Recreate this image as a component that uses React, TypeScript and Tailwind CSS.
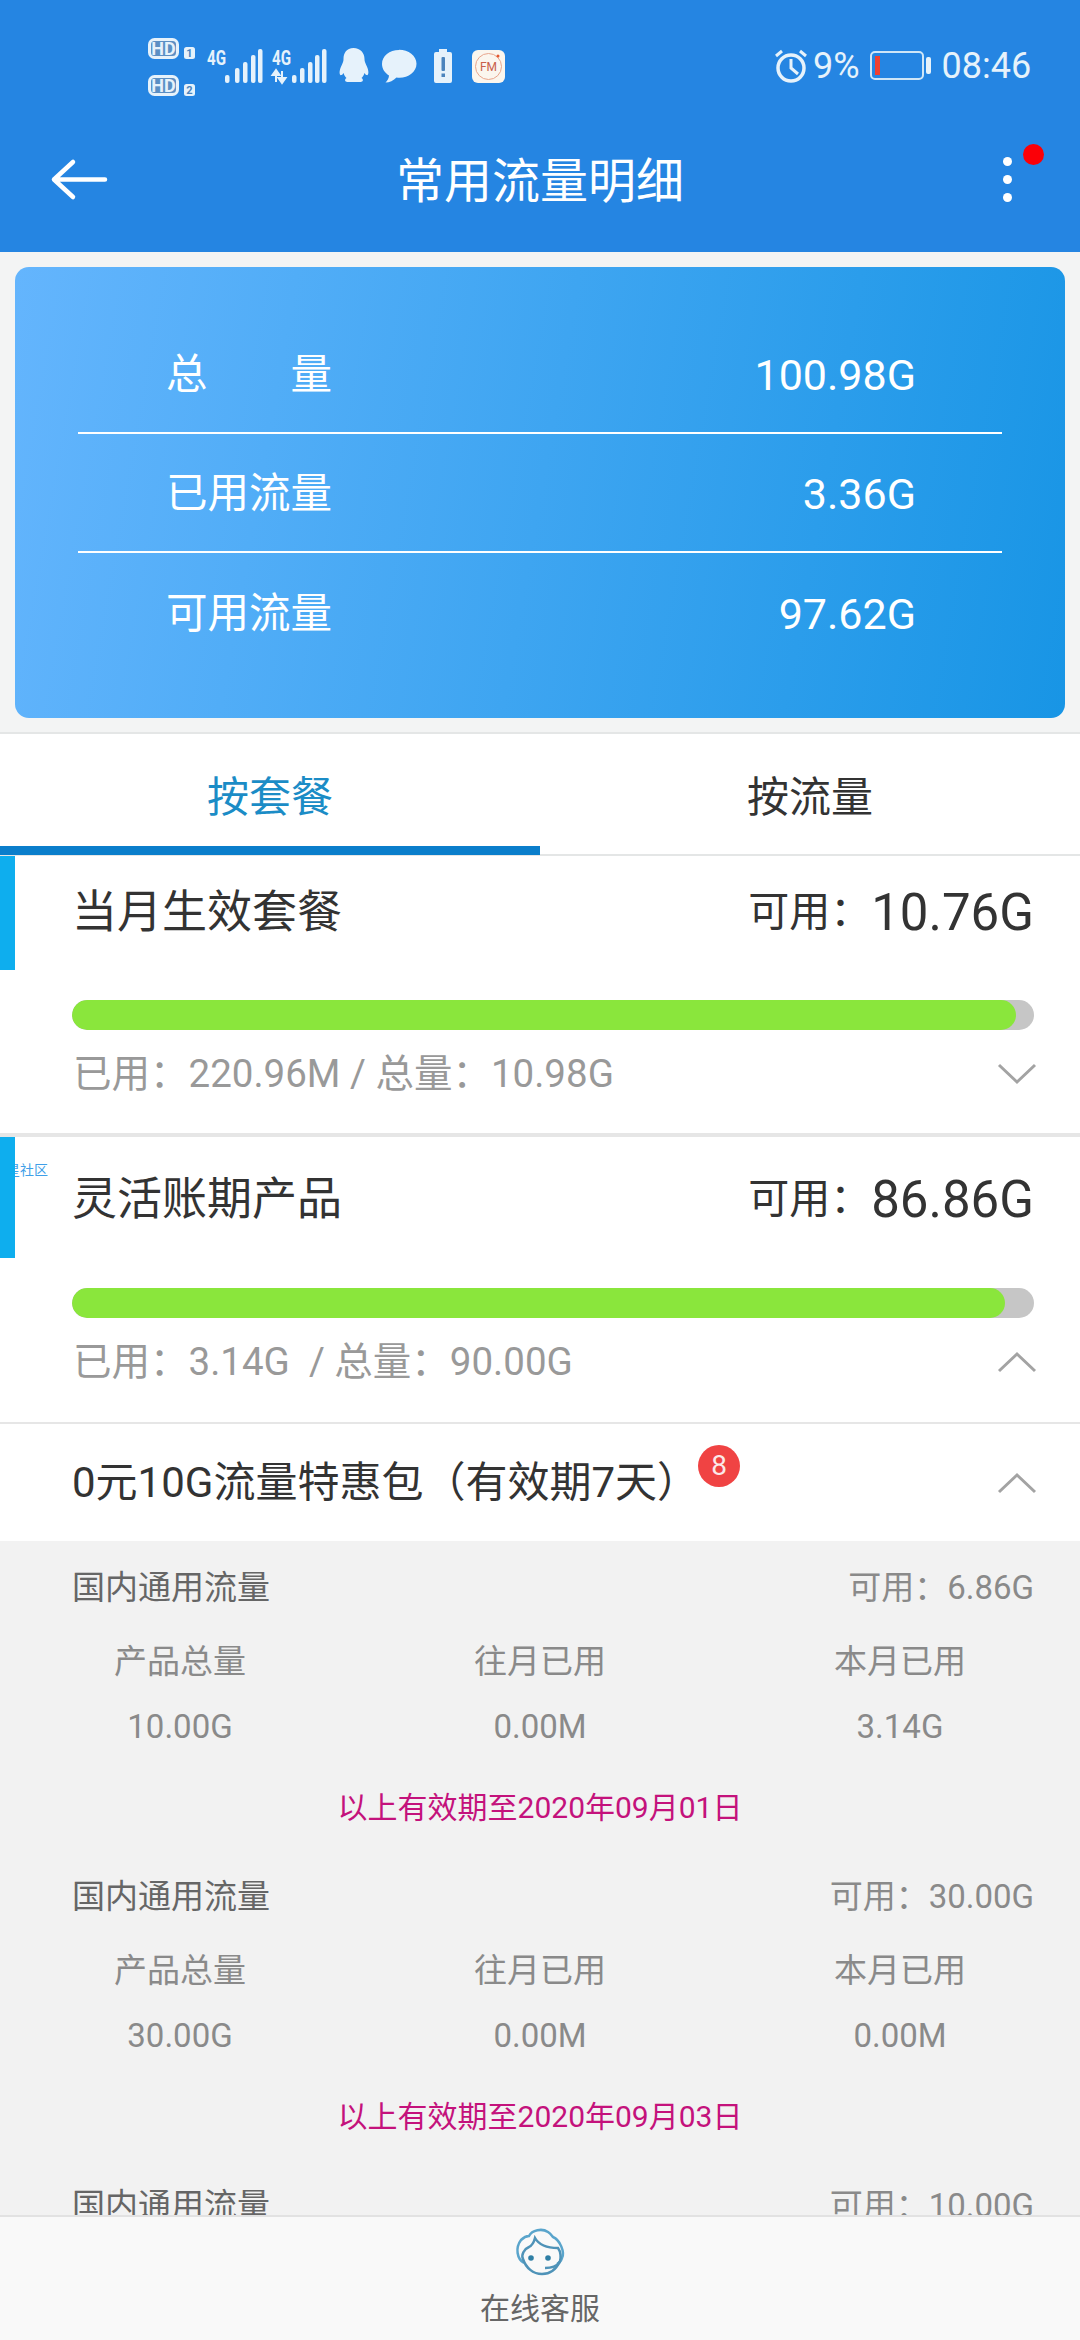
const cjk = "font-['Roboto','Noto_Sans_CJK_SC',sans-serif]";

function HD({ y, n }: { y: number; n: string }) {
  const c = "#e6f2fb";
  return (
    <>
      <rect x="149.500" y={y + 1.5} width="28" height="18" rx="5" fill="#5b8fc4" stroke={c} strokeWidth="3" />
      <text x="163.500" y={y + 16.5} textAnchor="middle" fontFamily="Roboto" fontWeight="700" fontSize="18" fill={c}>HD</text>
      <rect x="184" y={y + 9} width="11" height="12" rx="2.500" fill={c} />
      <text x="189.500" y={y + 19} textAnchor="middle" fontFamily="Roboto" fontWeight="700" fontSize="11" fill="#4b84bd">{n}</text>
    </>
  );
}

function StatusLeft() {
  const bars1 = [[225, 75], [235, 68], [243, 62], [251, 55], [258, 49]];
  const bars2 = [[292, 75], [300, 68], [308, 62], [315, 55], [322, 49]];
  const c = "#e6f2fb";
  return (
    <svg className="absolute left-[140px] top-[30px]" width="380" height="70" viewBox="140 30 380 70">
      <HD y={38} n="1" />
      <HD y={75} n="2" />
      <text x="207" y="65" fontFamily="Roboto" fontWeight="700" fontSize="20" fill={c} textLength="19" lengthAdjust="spacingAndGlyphs">4G</text>
      <text x="272" y="65" fontFamily="Roboto" fontWeight="700" fontSize="20" fill={c} textLength="19" lengthAdjust="spacingAndGlyphs">4G</text>
      {[...bars1, ...bars2].map(([x, y]) => (
        <rect key={x} x={x} y={y} width="4.500" height={83 - y} rx="2" fill={c} />
      ))}
      <path d="M276 74v8M276 70l-3.500 5h7zM282 71v8M282 83l-3.500-5h7z" stroke={c} strokeWidth="2" fill={c} />
      <path d="M353.500 48c-7 0-10 5-10 11 0 3-1 4-3 9-1.500 4-1 8 1 7 1 0 1-1 2-2 1 3 2 4 3 5-2 1-2 4 1 4h13c3 0 3-3 1-4 1-1 2-2 3-5 1 1 1 2 2 2 2 1 2.500-3 1-7-2-5-3-6-3-9 0-6-4-11-11-11z" fill={c} />
      <path d="M399 50c-9.500 0-17 6-17 14 0 5 3 9 7 11.500 0 2.500-1.500 5-3.500 7 4 0 8-2 11-5 1 .2 2 .3 3 .3 9 0 17-6 17-14s-8-14-17.500-14z" fill={c} />
      <path d="M439 52v-3h8v3h3a2 2 0 0 1 2 2v27a2 2 0 0 1-2 2h-14a2 2 0 0 1-2-2V54a2 2 0 0 1 2-2z" fill={c} />
      <rect x="441.500" y="57" width="3.500" height="14" rx="1" fill="#4b84bd" />
      <rect x="441.500" y="73.500" width="3.500" height="3.500" fill="#4b84bd" />
      <rect x="472" y="50" width="33" height="33" rx="6" fill="#fbf6ee" />
      <circle cx="488.500" cy="66.500" r="13" fill="none" stroke="#e8a58c" strokeWidth="1" />
      <circle cx="498" cy="56" r="1.500" fill="#e4572e" />
      <text x="488.500" y="71" textAnchor="middle" fontFamily="Roboto" fontSize="12" fill="#c8604a">FM</text>
    </svg>
  );
}

function StatusRight() {
  const c = "#e6f2fb";
  return (
    <div className="absolute left-[775px] top-[48px] flex h-[35px] items-center text-[#e6f2fb]">
      <svg width="32" height="35" viewBox="0 0 32 35" className="shrink-0">
        <circle cx="16" cy="20" r="13" fill="none" stroke={c} strokeWidth="3.500" />
        <path d="M16 11v9l7 6" fill="none" stroke={c} strokeWidth="3" />
        <path d="M1 8l6-5M31 8l-6-5" fill="none" stroke={c} strokeWidth="3" />
      </svg>
      <span className="ml-[6px] text-[36px] leading-none font-['Roboto',sans-serif]">9%</span>
      <div className="relative ml-[10px] h-[29px] w-[54px] rounded-[5px] border-2 border-[#cfe6f7]">
        <div className="absolute left-[3px] top-[3px] h-[19px] w-[5px] bg-[#f04030]" />
      </div>
      <div className="ml-[2px] h-[17px] w-[5px] rounded-[2px] bg-[#e6f2fb]" />
      <span className="ml-[11px] text-[36px] leading-none font-['Roboto',sans-serif]">08:46</span>
    </div>
  );
}

function Header() {
  return (
    <header className="relative h-[252px] shrink-0 bg-[#2585e2]">
      <StatusLeft />
      <StatusRight />
      <svg className="absolute left-[50px] top-[158px]" width="60" height="44" viewBox="0 0 60 44">
        <path d="M55 21.500H4M23 4L4 21.500 23 39" fill="none" stroke="#fff" strokeWidth="4.500" strokeLinecap="round" strokeLinejoin="round" />
      </svg>
      <div className="absolute inset-x-0 top-[151px] text-center text-[48px] leading-[62px] text-white">常用流量明细</div>
      <div className="absolute left-[1003px] top-[157px] flex flex-col gap-[9px]">
        <div className="size-[9px] rounded-full bg-white" />
        <div className="size-[9px] rounded-full bg-white" />
        <div className="size-[9px] rounded-full bg-white" />
      </div>
      <div className="absolute left-[1023px] top-[144px] size-[21px] rounded-full bg-[#fb0007]" />
    </header>
  );
}

function SummaryRow({ label, value, border }: { label: React.ReactNode; value: string; border?: boolean }) {
  return (
    <div className={`flex h-[119px] items-center justify-between pl-[88px] pr-[86px] pt-[4px] text-[41.500px] text-white ${border ? "border-b-2 border-white" : ""}`}>
      <span>{label}</span>
      <span className="text-[43px]">{value}</span>
    </div>
  );
}

function Summary() {
  return (
    <section className="h-[480px] shrink-0 bg-[#f3f4f4] px-[15px] pt-[15px]">
      <div className="h-[451px] rounded-[14px] bg-linear-[100deg] from-[#64b5fd] to-[#1895e5] px-[63px] pt-[48px]">
        <SummaryRow label={<span className="flex w-[166px] justify-between"><span>总</span><span>量</span></span>} value="100.98G" border />
        <SummaryRow label="已用流量" value="3.36G" border />
        <SummaryRow label="可用流量" value="97.62G" />
      </div>
    </section>
  );
}

function Tabs() {
  return (
    <nav className="flex h-[124px] shrink-0 border-y-2 border-[#e4e6e6] bg-white text-[42px]">
      <div className="-mb-[1px] flex w-[540px] items-center justify-center border-b-[9px] border-[#0a7ecb] pt-[14px] text-[#1b8cc6]">按套餐</div>
      <div className="flex w-[540px] items-center justify-center pt-[6px] text-[#333]">按流量</div>
    </nav>
  );
}

function Chevron({ up }: { up?: boolean }) {
  return (
    <svg width="40" height="22" viewBox="0 0 40 22" className="shrink-0">
      <path d={up ? "M2 20L20 3l18 17" : "M2 2l18 17L38 2"} fill="none" stroke="#a3a3a3" strokeWidth="3" />
    </svg>
  );
}

function Plan({ title, avail, used, pct, up, h, top, sub, tiny }: { title: string; avail: string; used: string; pct: number; up?: boolean; h: string; top: string; sub: string; tiny?: boolean }) {
  return (
    <section className={`relative shrink-0 bg-white ${h}`}>
      {tiny && <span className="absolute left-[6px] top-[26px] text-[14px] leading-none text-[#3f9fe8]">星社区</span>}
      <div className={`absolute left-0 top-0 w-[15px] bg-[#0eaeee] ${top}`} />
      <div className={`flex items-center justify-between pl-[72px] pr-[46px] ${top}`}>
        <span className="text-[45px] text-[#333]">{title}</span>
        <span className="flex items-center text-[#333]">
          <span className="text-[41px]">可用：</span>
          <span className="text-[51px]">{avail}</span>
        </span>
      </div>
      <div className="ml-[72px] mr-[46px] mt-[30px] h-[30px] overflow-hidden rounded-full bg-[#c6c6c6]">
        <div className="h-full rounded-full bg-[#8ae63c]" style={{ width: `${pct}%` }} />
      </div>
      <div className={`flex items-center justify-between pl-[73px] pr-[43px] ${sub}`}>
        <span className="whitespace-pre text-[38.500px] text-[#999]">{used}</span>
        <Chevron up={up} />
      </div>
    </section>
  );
}

function Cell({ top, bottom }: { top: string; bottom: string }) {
  return (
    <div className="flex flex-col items-center">
      <span className="flex h-[66px] items-center">{top}</span>
      <span className="flex h-[64px] items-center">{bottom}</span>
    </div>
  );
}

function DetailHead({ avail }: { avail: string }) {
  return (
    <div className="flex h-[88px] items-center justify-between pl-[72px] pr-[46px] pt-[6px] text-[33px] text-[#8a8a8a]">
      <span className="text-[#666]">国内通用流量</span>
      <span>可用：{avail}</span>
    </div>
  );
}

function Detail({ avail, total, month, date }: { avail: string; total: string; month: string; date: string }) {
  return (
    <div className="h-[309px] shrink-0 text-[33px] text-[#8a8a8a]">
      <DetailHead avail={avail} />
      <div className="grid grid-cols-3">
        <Cell top="产品总量" bottom={total} />
        <Cell top="往月已用" bottom="0.00M" />
        <Cell top="本月已用" bottom={month} />
      </div>
      <div className="mt-[29px] text-center text-[30px] leading-[40px] text-[#c4127c]">{date}</div>
    </div>
  );
}

function Footer() {
  return (
    <footer className="flex h-[125px] shrink-0 flex-col items-center border-t-2 border-[#e2e2e2] bg-[#f9f9f9]">
      <svg width="52" height="52" viewBox="0 0 52 52" className="mt-[9px]" fill="none" stroke="#4f93b8" strokeWidth="2.500">
        <path d="M10 37C3 33 1 22 7 14c3-3 6-4 8-4 3-6 13-8 19-4 3 2 4 4 5 5 7 3 12 15 9 21-1 3-3 5-5 6" stroke="#5aa5cc" />
        <path d="M9 33c-2-4 1-10 6-12 4-2 5-5 6-9 4 7 11 10 23 10 3 4 3 10 2 13-4 9-11 13-18 13-9 0-16-6-19-15z" />
        <circle cx="17" cy="32" r="2.800" fill="#2f7fa5" stroke="none" />
        <circle cx="34" cy="32" r="2.800" fill="#2f7fa5" stroke="none" />
        <path d="M46 36c-4 5-10 6-15 6" />
      </svg>
      <span className="mt-[11px] text-[30px] leading-[40px] text-[#666]">在线客服</span>
    </footer>
  );
}

export default function App() {
  return (
    <div className={`flex h-[2340px] w-[1080px] flex-col overflow-hidden bg-white ${cjk}`}>
      <Header />
      <Summary />
      <Tabs />
      <Plan h="h-[277px]" top="h-[114px]" sub="h-[88px]" title="当月生效套餐" avail="10.76G" pct={98.1} used="已用：220.96M / 总量：10.98G" />
      <div className="h-[4px] shrink-0 bg-[#e6e6e6]" />
      <Plan h="h-[285px]" top="h-[121px] pt-[5px]" sub="h-[88px]" title="灵活账期产品" avail="86.86G" pct={97} up used="已用：3.14G  / 总量：90.00G" tiny />
      <div className="h-[2px] shrink-0 bg-[#e6e6e6]" />
      <div className="flex h-[117px] shrink-0 items-center justify-between bg-white pl-[72px] pr-[43px]">
        <div className="relative text-[42px] leading-[56px] text-[#333]">
          0元10G流量特惠包（有效期7天）
          <span className="absolute left-[626px] top-[-10px] flex size-[42px] items-center justify-center rounded-full bg-[#f04343] text-[28px] leading-none text-[#fbe9e9]">8</span>
        </div>
        <Chevron up />
      </div>
      <main className="min-h-0 flex-1 overflow-hidden bg-[#f2f2f2]">
        <Detail avail="6.86G" total="10.00G" month="3.14G" date="以上有效期至2020年09月01日" />
        <Detail avail="30.00G" total="30.00G" month="0.00M" date="以上有效期至2020年09月03日" />
        <DetailHead avail="10.00G" />
      </main>
      <Footer />
    </div>
  );
}
